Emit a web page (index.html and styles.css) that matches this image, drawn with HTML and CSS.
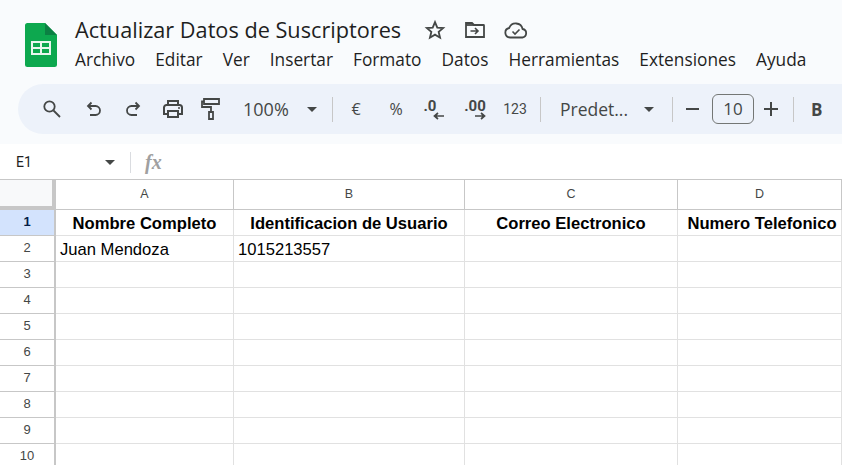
FILE: index.html
```html
<!DOCTYPE html>
<html lang="es">
<head>
<meta charset="utf-8">
<title>Actualizar Datos de Suscriptores</title>
<link rel="stylesheet" href="styles.css">
</head>
<body>
<header class="top">
  <svg class="logo" width="32" height="44" viewBox="0 0 32 44"><path d="M2.500 0H20l12 12v29.500a2.500 2.500 0 0 1-2.500 2.500h-27A2.500 2.500 0 0 1 0 41.500V2.500A2.500 2.500 0 0 1 2.500 0z" fill="#0da84f"/><path d="M20 0l12 12H20z" fill="#0b8043"/><path d="M6 18h20v14H6zm2 2v4h7v-4zm9 0v4h7v-4zm-9 6v4h7v-4zm9 0v4h7v-4z" fill="#e9f6ee" fill-rule="evenodd"/></svg>
  <div class="titles">
    <div class="title-row">
      <span class="title">Actualizar Datos de Suscriptores</span>
      <svg class="ti star" width="22" height="22" viewBox="0 0 24 24"><path d="M12 3.500l2.500 5.900 6.400.5-4.900 4.200 1.500 6.300-5.500-3.300-5.500 3.300 1.500-6.300-4.900-4.200 6.400-.5z" fill="none" stroke="#444746" stroke-width="2"/></svg>
      <svg class="ti folder" width="22" height="22" viewBox="0 0 22 22"><path d="M2 18V4h6l2 2h9.500a.5.5 0 0 1 .5.500V18z" fill="none" stroke="#444746" stroke-width="1.800"/><path d="M2 6h8" stroke="#444746" stroke-width="1.800"/><path d="M6.500 12h7m-2.500-3 3 3-3 3" fill="none" stroke="#444746" stroke-width="1.600"/></svg>
      <svg class="ti cloud" width="24" height="22" viewBox="0 0 24 22"><path d="M6 18.500a4.800 4.800 0 0 1-.8-9.500 7 7 0 0 1 13.400 1 4.300 4.300 0 0 1-.2 8.500z" fill="none" stroke="#444746" stroke-width="1.800"/><path d="M8.500 12.500l2.500 2.500 4.500-4.500" fill="none" stroke="#444746" stroke-width="1.600"/></svg>
    </div>
    <nav class="menu">
      <span>Archivo</span><span>Editar</span><span>Ver</span><span>Insertar</span><span>Formato</span><span>Datos</span><span>Herramientas</span><span>Extensiones</span><span>Ayuda</span>
    </nav>
  </div>
</header>
<div class="toolbar">
  <svg class="ic i-search" width="20" height="20" viewBox="0 0 20 20"><circle cx="7.500" cy="7.500" r="5.200" fill="none" stroke="#444746" stroke-width="1.800"/><path d="M11.500 11.500l6.500 6.500" stroke="#444746" stroke-width="1.800"/></svg>
  <svg class="ic i-undo" width="20" height="20" viewBox="0 0 20 20"><path d="M7.500 3.500l-3.500 3.500 3.500 3.500M4 7h7.500a4 4 0 0 1 0 9H6" fill="none" stroke="#444746" stroke-width="1.800"/></svg>
  <svg class="ic i-redo" width="20" height="20" viewBox="0 0 20 20"><path d="M12.500 3.500l3.500 3.500-3.500 3.500M16 7H8.500a4 4 0 0 0 0 9H14" fill="none" stroke="#444746" stroke-width="1.800"/></svg>
  <svg class="ic i-print" width="22" height="22" viewBox="0 0 22 22"><path d="M6 7V3h10v4M6 16H2V9.500A2.500 2.500 0 0 1 4.500 7h13A2.500 2.500 0 0 1 20 9.500V16h-4M6 13h10v6H6z" fill="none" stroke="#444746" stroke-width="2"/><circle cx="17" cy="10" r="1" fill="#444746"/></svg>
  <svg class="ic i-paint" width="20" height="24" viewBox="0 0 20 24"><path d="M3 2h15v5H3zM3 4.500H1V10h9v5M8 15h4v7H8z" fill="none" stroke="#444746" stroke-width="1.800"/></svg>
  <span class="zoom">100%</span>
  <span class="caret c-zoom"></span>
  <span class="sep s1"></span>
  <span class="sym euro">€</span>
  <span class="sym pct">%</span>
  <span class="dec d1"><b>.0</b><svg width="12" height="8" viewBox="0 0 12 8"><path d="M11 4H2m3-3L1.500 4 5 7" fill="none" stroke="#444746" stroke-width="1.700"/></svg></span>
  <span class="dec d2"><b>.00</b><svg width="12" height="8" viewBox="0 0 12 8"><path d="M1 4h9M7 1l3.500 3L7 7" fill="none" stroke="#444746" stroke-width="1.700"/></svg></span>
  <span class="n123">123</span>
  <span class="sep s2"></span>
  <span class="font">Predet...</span>
  <span class="caret c-font"></span>
  <span class="sep s3"></span>
  <span class="minus"></span>
  <span class="size">10</span>
  <svg class="plus" width="14" height="14" viewBox="0 0 14 14"><path d="M7 0v14M0 7h14" stroke="#444746" stroke-width="2"/></svg>
  <span class="sep s4"></span>
  <span class="bold">B</span>
</div>
<div class="formula">
  <span class="ref">E1</span>
  <span class="caret c-ref"></span>
  <span class="fsep"></span>
  <span class="fx">fx</span>
</div>
<div class="sheet">
  <div class="cell corner"></div><div class="cell ch">A</div><div class="cell ch">B</div><div class="cell ch">C</div><div class="cell ch">D</div>
  <div class="cell rh active">1</div><div class="cell hd">Nombre Completo</div><div class="cell hd">Identificacion de Usuario</div><div class="cell hd">Correo Electronico</div><div class="cell hd last">Numero Telefonico</div>
  <div class="cell rh">2</div><div class="cell tx">Juan Mendoza</div><div class="cell tx">1015213557</div><div class="cell"></div><div class="cell"></div>
  <div class="cell rh">3</div><div class="cell"></div><div class="cell"></div><div class="cell"></div><div class="cell"></div>
  <div class="cell rh">4</div><div class="cell"></div><div class="cell"></div><div class="cell"></div><div class="cell"></div>
  <div class="cell rh">5</div><div class="cell"></div><div class="cell"></div><div class="cell"></div><div class="cell"></div>
  <div class="cell rh">6</div><div class="cell"></div><div class="cell"></div><div class="cell"></div><div class="cell"></div>
  <div class="cell rh">7</div><div class="cell"></div><div class="cell"></div><div class="cell"></div><div class="cell"></div>
  <div class="cell rh">8</div><div class="cell"></div><div class="cell"></div><div class="cell"></div><div class="cell"></div>
  <div class="cell rh">9</div><div class="cell"></div><div class="cell"></div><div class="cell"></div><div class="cell"></div>
  <div class="cell rh">10</div><div class="cell"></div><div class="cell"></div><div class="cell"></div><div class="cell"></div>
</div>
</body>
</html>
```
FILE: styles.css
```css
* { box-sizing: border-box; }
html, body { margin: 0; height: 465px; overflow: hidden; }
body { background: #f9fbfd; font-family: "Open Sans", "Noto Sans", sans-serif; color: #1f1f1f; width: 842px; }

.top { display: flex; height: 84px; padding: 23px 0 0 25px; }
.logo { flex: none; }
.titles { margin-left: 18px; margin-top: -9px; }
.title-row { display: flex; align-items: center; height: 32px; }
.title { font-size: 21.700px; line-height: 32px; color: #1f1f1f; white-space: nowrap; width: 326px; }
.ti { flex: none; }
.star { margin-left: 23px; }
.folder { margin-left: 18px; }
.cloud { margin-left: 18px; }
.menu { display: flex; gap: 20px; font-size: 17.300px; line-height: 24px; margin-top: 2px; white-space: nowrap; color: #1f1f1f; }

.toolbar { display: flex; align-items: center; height: 50px; margin-left: 18px; background: #edf2fa; border-radius: 25px 0 0 25px; color: #444746; white-space: nowrap; overflow: hidden; }
.ic { flex: none; }
.i-search { margin-left: 24px; }
.i-undo { margin-left: 22px; }
.i-redo { margin-left: 19px; }
.i-print { margin-left: 19px; }
.i-paint { margin-left: 17px; }
.zoom { margin-left: 22px; font-size: 18px; width: 48px; }
.caret { flex: none; width: 0; height: 0; border-left: 5px solid transparent; border-right: 5px solid transparent; border-top: 5px solid #444746; }
.c-zoom { margin-left: 16px; }
.sep { flex: none; width: 1px; height: 25px; background: #c7c7c7; }
.s1 { margin-left: 15px; }
.sym { font-size: 16px; text-align: center; width: 24px; flex: none; }
.euro { margin-left: 11px; }
.pct { margin-left: 16px; }
.dec { display: flex; flex: none; flex-direction: column; align-items: center; width: 24px; line-height: 12px; }
.dec b { font: 700 15px/14px "Roboto", sans-serif; }
.dec svg { margin-top: -1px; }
.d1 b { margin-right: 6px; }
.d1 svg { margin-left: 12px; }
.d2 svg { margin-left: 10px; }
.d1 { margin-left: 13px; }
.d2 { margin-left: 18px; }
.n123 { flex: none; font: 400 14px "Roboto", sans-serif; margin-left: 16px; width: 24px; text-align: center; }
.s2 { margin-left: 13px; }
.font { flex: none; margin-left: 19px; font-size: 17.500px; width: 72px; }
.c-font { margin-left: 12px; }
.s3 { margin-left: 18px; }
.minus { flex: none; width: 13px; height: 2px; margin-left: 13px; background: #444746; }
.size { flex: none; width: 42px; height: 30px; margin-left: 13px; border: 1px solid #747775; border-radius: 6px; text-align: center; font-size: 17px; line-height: 28px; }
.plus { flex: none; margin-left: 10px; }
.s4 { margin-left: 15px; }
.bold { flex: none; margin-left: 17px; font-size: 17px; font-weight: 700; }

.formula { display: flex; align-items: center; height: 36px; margin-top: 10px; background: #fff; border-bottom: 1px solid #c7c7c7; padding-top: 1px; }
.ref { font: 400 14px "Roboto", sans-serif; margin-left: 16px; width: 89px; color: #1f1f1f; }
.fsep { flex: none; width: 1px; height: 21px; margin-left: 15px; background: #dadce0; }
.fx { font: italic 700 20px "Liberation Serif", serif; margin-left: 14px; color: #a0a0a0; }

.sheet { display: grid; grid-template-columns: 56px 178px 231px 213px 1fr; grid-template-rows: 30px repeat(10, 26px); background: #fff; font-family: "Liberation Sans", Arial, sans-serif; }
.cell { border-right: 1px solid #e1e1e1; border-bottom: 1px solid #e1e1e1; font-size: 13px; line-height: 25px; color: #000; white-space: nowrap; overflow: hidden; }
.corner { background: #f8f9fa; border-right: 4px solid #c7c7c7; border-bottom: 4px solid #c7c7c7; }
.ch { border-color: #c7c7c7; text-align: center; font-size: 12.500px; color: #444746; line-height: 29px; }
.rh { border-color: #c7c7c7; border-right-width: 2px; text-align: center; font-size: 13px; color: #444746; line-height: 23px; }
.active { background: #d3e3fd; font-weight: 700; color: #041e49; }
.hd { text-align: center; font-size: 16.600px; font-weight: 700; line-height: 27px; }
.last { padding-left: 5px; }
.tx { font-size: 16.600px; padding-left: 4px; line-height: 27px; }
```
